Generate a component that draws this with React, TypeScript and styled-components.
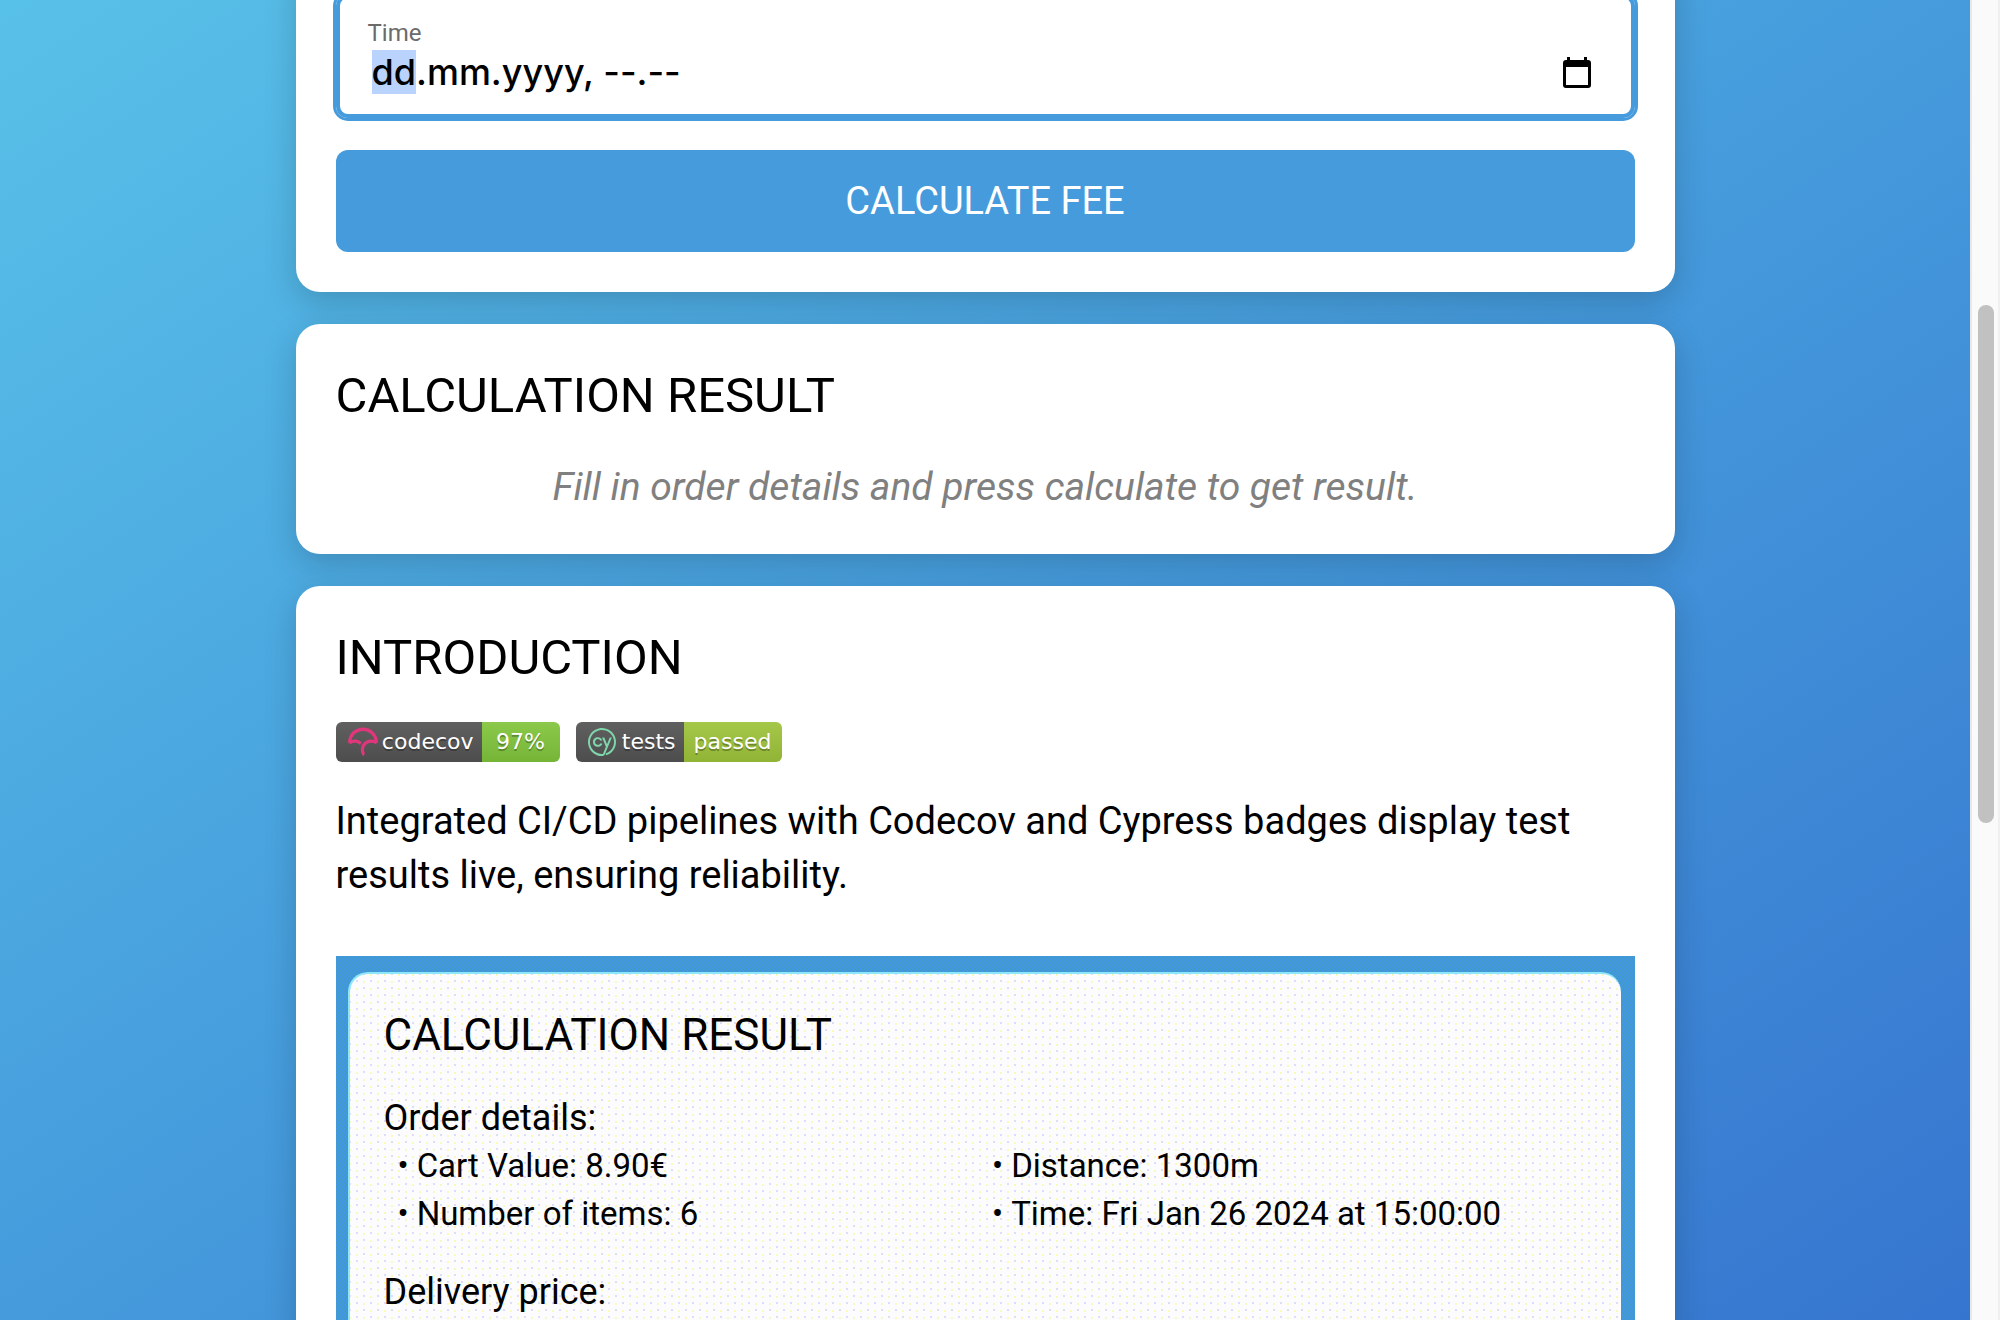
import React, { useEffect, useRef } from 'react';
import styled, { createGlobalStyle } from 'styled-components';
import { SiCodecov, SiCypress } from 'react-icons/si';

const GlobalStyle = createGlobalStyle`
  *, *::before, *::after { box-sizing: border-box; }
  body { margin: 0; font-family: Roboto, 'Noto Sans', sans-serif; color: #000; }
  h1, h2, h3, p, ul, figure { margin: 0; padding: 0; font-weight: 400; }
`;

const Frame = styled.div`
  display: grid;
  grid-template-columns: minmax(0, 1fr) 30px;
  height: 100vh;
  overflow: hidden;
`;

const Page = styled.main`
  display: flex;
  justify-content: center;
  align-items: flex-start;
  min-height: 0;
  overflow: hidden;
  background: linear-gradient(to bottom right, #58c1e8, #459bdc 50%, #3675cf);
`;

const Column = styled.div`
  display: flex;
  flex-direction: column;
  gap: 32px;
  width: 70%;
  margin-top: -46px;
`;

const Card = styled.section`
  display: flex;
  flex-direction: column;
  padding: 40px;
  border-radius: 24px;
  background: #fff;
  box-shadow: 0 10px 32px rgba(0, 0, 0, 0.18);
`;

const Heading = styled.h2`
  margin-bottom: 34px;
  padding-top: 2px;
  font-size: 49px;
  line-height: 60px;
`;

const Text = styled.p`
  font-size: 38px;
  line-height: 54px;
`;

const Hint = styled(Text)`
  color: #808080;
  font-size: 39px;
  font-style: italic;
  text-align: center;
`;

const Field = styled.div`
  display: grid;
  grid-template-columns: minmax(0, 1fr) auto;
  align-items: center;
  height: 124px;
  margin-bottom: 32px;
  padding: 20px 40px 18px 28px;
  border: 4px solid #459bdc;
  border-radius: 12px;
  box-shadow: 0 0 0 3px #459bdc;
`;

const FieldLabel = styled.label`
  grid-column: 1 / -1;
  color: #6b6b6b;
  font-size: 24px;
  line-height: 28px;
`;

const DateInput = styled.input`
  min-width: 0;
  height: 48px;
  padding: 0 4px;
  border: 0;
  outline: 0;
  background: transparent;
  color: #000;
  font: 500 36px/46px Inter, sans-serif;
  &::selection { background: #b9d3fd; color: #000; }
`;

const PickerButton = styled.button`
  display: flex;
  padding: 0;
  border: 0;
  background: none;
`;

const SubmitButton = styled.button`
  height: 102px;
  border: 0;
  border-radius: 12px;
  background: #459bdc;
  color: #fff;
  font: 400 38px/54px Roboto, sans-serif;
`;

const Badges = styled.div`
  display: flex;
  gap: 16px;
  margin-bottom: 32px;
`;

const Badge = styled.a`
  display: flex;
  height: 40px;
  border-radius: 6px;
  overflow: hidden;
  color: #fff;
  font: 400 22px/40px 'DejaVu Sans', Verdana, sans-serif;
  text-decoration: none;
  text-shadow: 0 2px 0 rgba(1, 1, 1, 0.3);
`;

const BadgeName = styled.span<{ $width: number }>`
  display: flex;
  align-items: center;
  justify-content: space-between;
  width: ${(p) => p.$width}px;
  padding: 0 8px 0 12px;
  background: linear-gradient(#606060, #4d4d4d);
`;

const BadgeValue = styled.span<{ $tone: 'green' | 'lime'; $width: number }>`
  width: ${(p) => p.$width}px;
  text-align: center;
  background: ${(p) =>
    p.$tone === 'green' ? 'linear-gradient(#8bc84b, #75b536)' : 'linear-gradient(#a5c74a, #91b436)'};
`;

const Shot = styled.figure`
  margin-top: 54px;
  padding: 16px 14px 16px 12px;
  background: repeating-conic-gradient(#3f9bc8 0 25%, #4495e6 0 50%) 0 0 / 4px 4px;
`;

const ShotCard = styled.div`
  padding: 34px 34px 32px;
  border-top: 2px solid #8ee6fb;
  border-left: 2px solid #8ee6fb;
  border-radius: 20px;
  background:
    radial-gradient(circle, #deddf8 0 1px, transparent 1px) 0 0 / 14px 14px,
    radial-gradient(circle, #deddf8 0 1px, transparent 1px) 7px 7px / 14px 14px,
    radial-gradient(circle, #fafab8 0 1px, transparent 1px) 7px 1px / 14px 14px,
    radial-gradient(circle, #fafab8 0 1px, transparent 1px) 0 8px / 14px 14px,
    #fcfcfe;
`;

const ShotHeading = styled.h3`
  margin-bottom: 32px;
  font-size: 44px;
  line-height: 54px;
`;

const ShotLabel = styled.p`
  font-size: 36px;
  line-height: 48px;
`;

const Details = styled.ul`
  display: grid;
  grid-template-columns: 1fr 1fr;
  margin-bottom: 30px;
  padding-left: 14px;
  font-size: 33px;
  line-height: 48px;
  list-style: none;
`;

const Detail = styled.li`
  &::before { content: '•'; margin-right: 8px; }
`;

const Rail = styled.div`
  padding: 305px 4px 0 6px;
  border-left: 2px solid #e8e8e8;
  border-right: 2px solid #f0f0f0;
  background: #fafafa;
`;

const Thumb = styled.div`
  height: 518px;
  border-radius: 8px;
  background: #c1c1c1;
`;

const CalendarIcon = () => (
  <svg width="28" height="32" viewBox="0 0 28 32" aria-hidden="true">
    <path
      d="M4 1h3v3h14V1h3v3h1a3 3 0 0 1 3 3v22a3 3 0 0 1-3 3H3a3 3 0 0 1-3-3V7a3 3 0 0 1 3-3h1zM3 11v18h22V11z"
      fillRule="evenodd"
    />
  </svg>
);

const orderDetails = [
  'Cart Value: 8.90€',
  'Distance: 1300m',
  'Number of items: 6',
  'Time: Fri Jan 26 2024 at 15:00:00',
];

export default function App() {
  const time = useRef<HTMLInputElement>(null);

  useEffect(() => {
    time.current?.focus({ preventScroll: true });
    time.current?.setSelectionRange(0, 2);
  }, []);

  return (
    <>
      <GlobalStyle />
      <Frame>
        <Page>
          <Column>
            <Card as="form">
              <Field>
                <FieldLabel htmlFor="time">Time</FieldLabel>
                <DateInput id="time" ref={time} defaultValue="dd.mm.yyyy, --.--" />
                <PickerButton type="button" aria-label="Open calendar">
                  <CalendarIcon />
                </PickerButton>
              </Field>
              <SubmitButton type="button">CALCULATE FEE</SubmitButton>
            </Card>
            <Card>
              <Heading>CALCULATION RESULT</Heading>
              <Hint>Fill in order details and press calculate to get result.</Hint>
            </Card>
            <Card>
              <Heading>INTRODUCTION</Heading>
              <Badges>
                <Badge href="#codecov">
                  <BadgeName $width={146}>
                    <SiCodecov size={30} color="#e0367c" />
                    codecov
                  </BadgeName>
                  <BadgeValue $tone="green" $width={78}>97%</BadgeValue>
                </Badge>
                <Badge href="#cypress">
                  <BadgeName $width={108}>
                    <SiCypress size={28} color="#7fd6ab" />
                    tests
                  </BadgeName>
                  <BadgeValue $tone="lime" $width={98}>passed</BadgeValue>
                </Badge>
              </Badges>
              <Text>
                Integrated CI/CD pipelines with Codecov and Cypress badges display test results
                live, ensuring reliability.
              </Text>
              <Shot>
                <ShotCard>
                  <ShotHeading>CALCULATION RESULT</ShotHeading>
                  <ShotLabel>Order details:</ShotLabel>
                  <Details>
                    {orderDetails.map((d) => (
                      <Detail key={d}>{d}</Detail>
                    ))}
                  </Details>
                  <ShotLabel>Delivery price:</ShotLabel>
                </ShotCard>
              </Shot>
            </Card>
          </Column>
        </Page>
        <Rail>
          <Thumb />
        </Rail>
      </Frame>
    </>
  );
}
